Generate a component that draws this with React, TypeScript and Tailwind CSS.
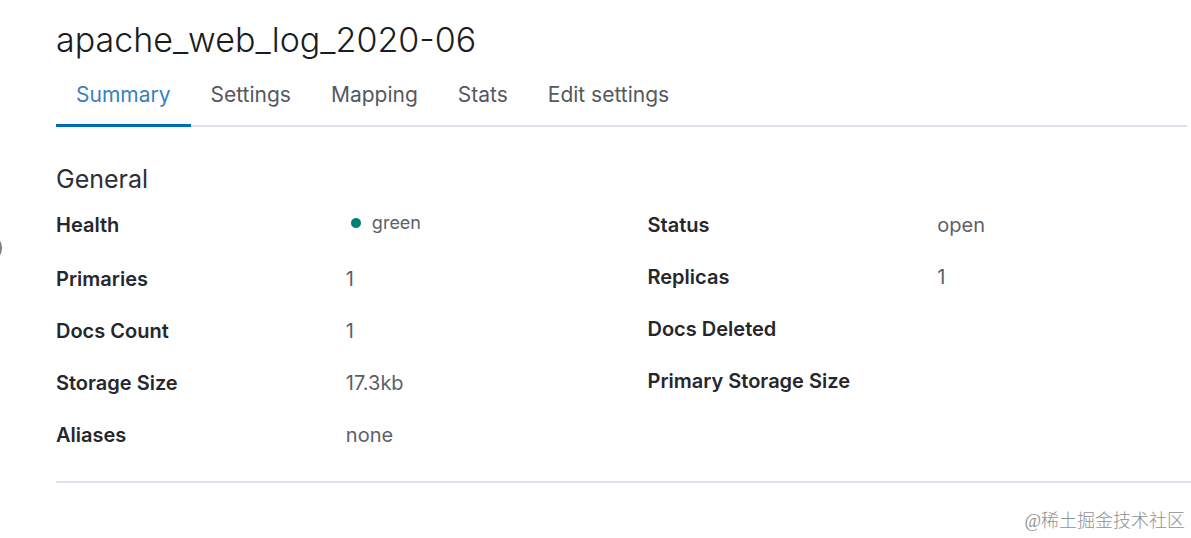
import { useState, type ReactNode } from "react";

const tabs = ["Summary", "Settings", "Mapping", "Stats", "Edit settings"];

type Entry = { label: string; value?: ReactNode; tall?: boolean };

const leftEntries: Entry[] = [
  {
    label: "Health",
    tall: true,
    value: (
      <span className="flex items-center gap-2.5 pl-1 text-lg leading-7">
        <span className="size-3 rounded-full border border-white bg-[#017d73]" />
        green
      </span>
    ),
  },
  { label: "Primaries", value: "1" },
  { label: "Docs Count", value: "1" },
  { label: "Storage Size", value: "17.3kb" },
  { label: "Aliases", value: "none" },
];

const rightEntries: Entry[] = [
  { label: "Status", value: "open" },
  { label: "Replicas", value: "1" },
  { label: "Docs Deleted" },
  { label: "Primary Storage Size" },
];

function DescriptionList({ entries }: { entries: Entry[] }) {
  return (
    <dl>
      {entries.map((entry) => (
        <div
          key={entry.label}
          className={`grid grid-cols-[8fr_7fr] items-start text-xl leading-8 ${entry.tall ? "h-[54px]" : "h-[52px]"}`}
        >
          <dt className="font-semibold whitespace-nowrap text-[#25272d]">{entry.label}</dt>
          <dd className="text-[#5c5f68]">{entry.value}</dd>
        </div>
      ))}
    </dl>
  );
}

export default function App() {
  const [active, setActive] = useState("Summary");

  return (
    <div className="relative overflow-hidden bg-white font-['Inter','Noto_Sans_CJK_SC',sans-serif]">
      <span className="absolute top-[233px] -left-7 size-[30px] rounded-full bg-[#808080]" />
      <main className="pt-4 pl-14">
        <h1 className="text-[34px] leading-12 font-light text-[#1a1c21]">apache_web_log_2020-06</h1>
        <div role="tablist" className="mr-1 flex border-b-2 border-[#dde2ec]">
          {tabs.map((tab) => (
            <button
              key={tab}
              type="button"
              role="tab"
              aria-selected={tab === active}
              onClick={() => setActive(tab)}
              className={`-mb-0.5 h-[63px] border-b-[3px] px-5 pt-0.5 text-[21px] leading-[58px] ${
                tab === active ? "border-[#006bb4] text-[#3a7fc0]" : "border-transparent text-[#555860]"
              }`}
            >
              {tab}
            </button>
          ))}
        </div>
        <section>
          <h2 className="pt-8 text-[25px] leading-10 text-[#2c2f36]">General</h2>
          <div className="grid grid-cols-2 gap-x-12 pt-2.5">
            <DescriptionList entries={leftEntries} />
            <DescriptionList entries={rightEntries} />
          </div>
        </section>
        <hr className="mt-2.5 border-t-2 border-[#dce2ee]" />
      </main>
      <footer className="pt-6 pr-1.5 pb-3 text-right font-['Liberation_Serif','Noto_Sans_CJK_SC',serif] text-lg leading-7 font-light text-[#909090]">
        @稀土掘金技术社区
      </footer>
    </div>
  );
}
